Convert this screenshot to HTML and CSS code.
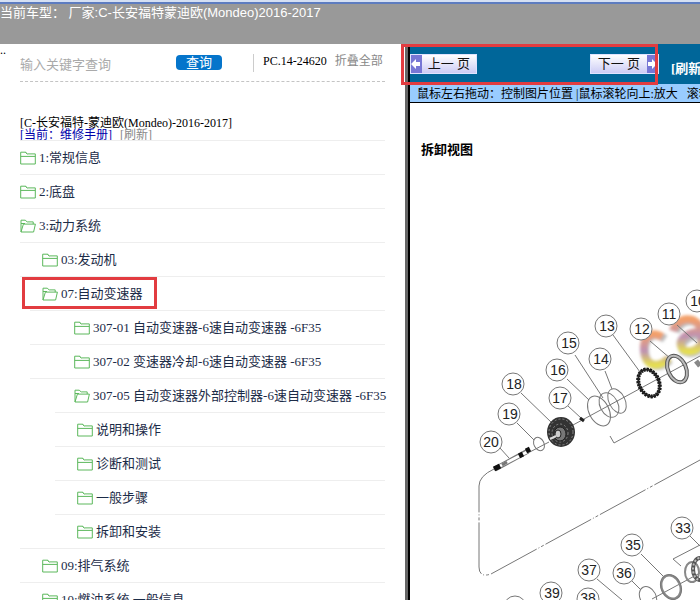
FILE: index.html
```html
<!DOCTYPE html>
<html lang="zh-CN">
<head>
<meta charset="utf-8">
<title>维修手册</title>
<link rel="stylesheet" href="styles.css">
</head>
<body>
<svg class="defs" aria-hidden="true">
  <symbol id="folder" viewBox="0 0 16 14"><path d="M.7 13V1.2h4.6l2 1.7h8V13zM.7 5.4h14.6M5.3 1.2l2 1.7" /></symbol>
  <symbol id="folder-open" viewBox="0 0 16 14"><path d="M1 13V1.2h4.2l2 1.7h6v2.2M1 13 3.4 5.1h12L13.6 13zM1 4.5h4" /></symbol>
</svg>
<header class="top">当前车型： 厂家:C-长安福特蒙迪欧(Mondeo)2016-2017</header>
<main class="body">
  <nav class="side">
    <span class="dots">..</span>
    <form class="search">
      <input class="query" type="text" aria-label="关键字" placeholder="输入关键字查询">
      <button class="go" type="button">查询</button>
      <span class="code">PC.14-24620</span>
      <a class="fold" href="#">折叠全部</a>
    </form>
    <div class="book">
      <div>[C-长安福特-蒙迪欧(Mondeo)-2016-2017]</div>
      <div><a class="current" href="#">[当前：维修手册]</a><a class="reload" href="#">[刷新]</a></div>
    </div>
    <ul class="tree">
      <li><a class="row" href="#"><svg><use href="#folder"/></svg>1:常规信息</a></li>
      <li><a class="row" href="#"><svg><use href="#folder"/></svg>2:底盘</a></li>
      <li><a class="row" href="#"><svg><use href="#folder-open"/></svg>3:动力系统</a>
        <ul>
          <li><a class="row l1" href="#"><svg><use href="#folder"/></svg>03:发动机</a></li>
          <li><a class="row l1 marked" href="#"><svg><use href="#folder-open"/></svg>07:自动变速器</a>
            <ul>
              <li><a class="row l2" href="#"><svg><use href="#folder"/></svg>307-01 自动变速器-6速自动变速器 -6F35</a></li>
              <li><a class="row l2" href="#"><svg><use href="#folder"/></svg>307-02 变速器冷却-6速自动变速器 -6F35</a></li>
              <li><a class="row l2" href="#"><svg><use href="#folder-open"/></svg>307-05 自动变速器外部控制器-6速自动变速器 -6F35</a>
                <ul>
                  <li><a class="row l3" href="#"><svg><use href="#folder"/></svg>说明和操作</a></li>
                  <li><a class="row l3" href="#"><svg><use href="#folder"/></svg>诊断和测试</a></li>
                  <li><a class="row l3" href="#"><svg><use href="#folder"/></svg>一般步骤</a></li>
                  <li><a class="row l3" href="#"><svg><use href="#folder"/></svg>拆卸和安装</a></li>
                </ul>
              </li>
            </ul>
          </li>
          <li><a class="row l1" href="#"><svg><use href="#folder"/></svg>09:排气系统</a></li>
          <li><a class="row l1" href="#"><svg><use href="#folder"/></svg>10:燃油系统 一般信息</a></li>
        </ul>
      </li>
    </ul>
  </nav>
  <section class="view">
    <div class="bar">
      <button class="page prev" type="button"><span class="arrow"><svg viewBox="0 0 10 10"><path d="M0 5 5 0v3h4v4H5v3z"/></svg></span><span class="word">上一 页</span></button>
      <button class="page next" type="button"><span class="word">下一 页</span><span class="arrow"><svg viewBox="0 0 10 10"><path d="M10 5 5 0v3H1v4h4v3z"/></svg></span></button>
      <a class="refresh" href="#">[刷新]</a>
    </div>
    <p class="hint">鼠标左右拖动：控制图片位置 |鼠标滚轮向上:放大 &nbsp; 滚轮向下:缩小</p>
    <h1 class="title">拆卸视图</h1>
    <svg class="diagram" viewBox="410 280 290 320" width="290" height="320" role="img" aria-label="变速器分解图">
      <defs>
        <filter id="soft" x="-30%" y="-30%" width="160%" height="160%"><feGaussianBlur stdDeviation="1.4"/></filter>
        <linearGradient id="glow" x1="0" y1="0" x2="0" y2="1"><stop offset="0" stop-color="#f3a06a"/><stop offset=".55" stop-color="#bd91b4"/><stop offset="1" stop-color="#e5df50"/></linearGradient>
      </defs>
      <g class="mark" filter="url(#soft)">
        <path class="shade" d="M665 339c-12-9-21 0-20 13 1 14 13 19 25 8"/>
        <path class="shade" d="M676 332c5-14 23-14 27-1v22M703 335c-13-1-22 7-21 13s14 9 21-3"/>
        <path d="M662 337c-12-7-19 1-18 14 1 14 13 19 25 7"/>
        <path d="M673 331c5-15 24-16 28-1v20M702 332c-14-1-23 7-21 14s15 8 21-3"/>
      </g>
      <g class="thin">
        <path d="M526 454 549 442M573 425 700 356M610 436l4 7 86-47"/>
        <path stroke-dasharray="52 2 3 2 1 2" d="M700 460 491 574q-12 4-12-7v-81q0-10 15-17"/>
        <path d="m613 335 27 37M650 341l21 18M677 325l20 18M575 355l28 43M605 371l7 18M567 379l22 21M568 406l13 12M521 393l31 30M517 423l17 17M500 448l9 10M641 554l22 22M632 581l8 8M597 579l25 21M690 536l10 10M700 545l-27 14 8 7M652 599l48-26"/>
      </g>
      <g class="ring">
        <ellipse cx="599" cy="411" rx="10" ry="16" transform="rotate(-27 599 411)"/>
        <ellipse cx="609" cy="405" rx="9" ry="13" transform="rotate(-27 609 405)"/>
        <ellipse cx="617" cy="401" rx="8" ry="13" transform="rotate(-27 617 401)"/>
        <ellipse cx="539" cy="444" rx="5" ry="7" transform="rotate(-27 539 444)"/>
        <ellipse cx="648" cy="597" rx="8" ry="11" transform="rotate(-27 648 597)"/>
        <ellipse class="mid" cx="671" cy="587" rx="9" ry="12" transform="rotate(-24 671 587)"/>
        <ellipse cx="671" cy="587" rx="10" ry="13" transform="rotate(-24 671 587)"/>
        <ellipse class="heavy" cx="677" cy="369" rx="9" ry="14" transform="rotate(-24 677 369)"/>
        <ellipse class="groove" cx="677" cy="369" rx="9" ry="14" transform="rotate(-24 677 369)"/>
        <ellipse class="toothed" cx="649" cy="383" rx="10" ry="14" transform="rotate(-24 649 383)"/>
        <ellipse class="black" cx="649" cy="383" rx="10" ry="14" transform="rotate(-24 649 383)"/>
        <ellipse class="mid" cx="692" cy="572" rx="7" ry="10"/>
        <ellipse class="heavy" cx="700" cy="569" rx="7" ry="11"/>
        <ellipse class="groove" cx="700" cy="569" rx="7" ry="11" stroke-dasharray="2 2"/>
      </g>
      <g>
        <ellipse cx="561" cy="432" rx="14" ry="15" fill="#333"/>
        <g fill="none" stroke="#888" stroke-dasharray="2 2"><ellipse cx="561" cy="432" rx="12" ry="13"/><ellipse cx="560" cy="433" rx="8" ry="9"/></g>
        <ellipse cx="560" cy="434" rx="6" ry="7" fill="#777" stroke="#222"/>
        <ellipse cx="558" cy="434" rx="3" ry="4" fill="#ccc" stroke="#222"/>
        <path d="m550 439 6-3" stroke="#ddd" stroke-width="2"/>
        <path d="m580 418 4 3" stroke="#222" stroke-width="3"/>
        <path d="m696 361 4 5" stroke="#888" stroke-width="5"/>
      </g>
      <g fill="none">
        <path d="m495 469 33-18" stroke="#777" stroke-width="5"/>
        <path d="m500 466 27-14" stroke="#fff" stroke-width="3"/>
        <path d="m494 469 6-3M519 456l4-2M526 451l4-2" stroke="#111" stroke-width="5"/>
        <path d="m502 465 5-3" stroke="#777" stroke-width="3"/>
      </g>
      <g class="balloons">
        <circle cx="697" cy="301" r="11"/><text x="698" y="306">10</text>
        <circle cx="669" cy="314" r="11"/><text x="669" y="319">11</text>
        <circle cx="641" cy="329" r="11"/><text x="642" y="334">12</text>
        <circle cx="606" cy="326" r="11"/><text x="607" y="331">13</text>
        <circle cx="600" cy="359" r="11"/><text x="601" y="364">14</text>
        <circle cx="568" cy="343" r="11"/><text x="569" y="348">15</text>
        <circle cx="557" cy="370" r="11"/><text x="558" y="375">16</text>
        <circle cx="560" cy="398" r="11"/><text x="560" y="403">17</text>
        <circle cx="513" cy="384" r="11"/><text x="514" y="389">18</text>
        <circle cx="509" cy="414" r="11"/><text x="510" y="419">19</text>
        <circle cx="491" cy="442" r="11"/><text x="491" y="447">20</text>
        <circle cx="682" cy="528" r="11"/><text x="683" y="533">33</text>
        <circle cx="632" cy="545" r="11"/><text x="633" y="550">35</text>
        <circle cx="624" cy="573" r="11"/><text x="624" y="578">36</text>
        <circle cx="589" cy="570" r="11"/><text x="589" y="575">37</text>
        <circle cx="588" cy="599" r="11"/><text x="588" y="603">38</text>
        <circle cx="551" cy="593" r="11"/><text x="552" y="598">39</text>
        <circle cx="515" cy="607" r="11"/>
      </g>
    </svg>
  </section>
</main>
</body>
</html>
```
FILE: styles.css
```css
*, *::before, *::after { box-sizing: border-box; }
body {
  margin: 0;
  height: 100vh;
  overflow: hidden;
  display: flex;
  flex-direction: column;
  background: #fff;
  color: #000;
  font: 12px/14px "Liberation Serif", "Noto Sans CJK SC", serif;
}
a { color: inherit; text-decoration: none; }
button { font-family: inherit; border: 0; padding: 0; }
ul { list-style: none; margin: 0; padding: 0; }
.defs { position: absolute; width: 0; height: 0; }

.top {
  flex: none;
  height: 44px;
  padding-top: 1px;
  border-top: 4px solid #5d7cc0;
  background: #999;
  color: #fff;
  font: 13px/16px "Liberation Sans", "Noto Sans CJK SC", sans-serif;
  white-space: nowrap;
  position: relative;
}
.top::before { content: ""; position: absolute; top: -4px; left: 0; right: 0; height: 2px; background: #d5e0f3; }

.body { flex: 1; min-height: 0; display: grid; grid-template-columns: 405px 1fr; }
.side { position: relative; padding: 8px 20px 0; overflow: hidden; }
.dots { position: absolute; top: -1px; left: 0; }

.search { display: flex; align-items: center; height: 30px; padding-bottom: 8px; border-bottom: 1px dashed #c4c4c4; }
.query { width: 156px; border: 0; padding: 0; margin-top: 4px; outline: 0; background: none; font: 13px/18px "Liberation Sans", "Noto Sans CJK SC", sans-serif; }
.query::placeholder { color: #aaa; }
.go { width: 46px; height: 15px; border-radius: 4px; background: #0575cb; color: #fff; font-size: 13px; line-height: 15px; }
.code { margin-left: 31px; padding: 0 0 4px 9px; border-left: 1px solid #ccc; }
.fold { margin-left: 8px; padding-bottom: 4px; color: #888; white-space: nowrap; }

.book { padding-top: 35px; height: 58px; line-height: 12px; white-space: nowrap; }
.current { color: #00a; }
.reload { margin-left: 8px; color: #888; }

.row {
  position: relative;
  display: flex;
  align-items: center;
  gap: 3px;
  height: 34px;
  border-top: 1px solid #eee;
  color: #1c2c48;
  font-size: 13px;
  white-space: nowrap;
}
.row svg { width: 16px; height: 14px; flex: none; fill: none; stroke: #5cb85c; }
.l1 { padding-left: 22px; }
.l2 { margin-left: 10px; padding-left: 44px; }
.l3 { margin-left: 35px; padding-left: 22px; }
.marked::after { content: ""; position: absolute; top: 0; left: 2px; width: 135px; height: 32px; border: 3px solid #e23c40; }

.view { position: relative; min-width: 0; border-left: 3px solid #666; box-shadow: inset 2px 0 #000; padding-left: 2px; }
.view::before { content: ""; position: absolute; z-index: 1; top: 0; left: -7px; width: 257px; height: 41px; border: 3px solid #e23c40; }
.bar { display: flex; align-items: center; height: 40px; background: #069; overflow: hidden; }
.page { display: flex; flex: none; height: 20px; border: 1px solid #dfe3ff; background: linear-gradient(#fff, #ccccf5); color: #111; font-size: 13px; }
.arrow { display: flex; align-items: center; width: 11px; height: 18px; background: #7777d5; }
.arrow svg { width: 10px; height: 10px; fill: #fff; }
.word { flex: 1; line-height: 18px; }
.prev { width: 67px; }
.next { width: 69px; margin-left: 113px; }
.refresh { margin: 10px 0 0 12px; color: #fff; font-weight: bold; font-size: 13px; white-space: nowrap; }
.hint { margin: 0; height: 19px; padding-left: 7px; border-bottom: 1px solid #000; background: #9cf; line-height: 21px; white-space: nowrap; overflow: hidden; }
.title { margin: 0; padding: 38px 11px 0; height: 177px; font: bold 13px/16px "Noto Sans CJK SC", sans-serif; }
.diagram { display: block; }

.mark { fill: none; stroke: url(#glow); stroke-width: 8; }
.shade { stroke: #bbb; }
.thin { fill: none; stroke: #777; }
.ring { fill: none; stroke: #777; }
.mid { stroke: #888; stroke-width: 2; }
.heavy { stroke: #555; stroke-width: 4; }
.groove { stroke: #bbb; stroke-width: 2; }
.toothed { stroke: #111; stroke-width: 4; stroke-dasharray: 2 1; }
.black { stroke: #222; stroke-width: 2; }
.balloons { font: 14px "Liberation Sans", sans-serif; text-anchor: middle; fill: #222; }
.balloons circle { fill: #fff; stroke: #777; }
```
